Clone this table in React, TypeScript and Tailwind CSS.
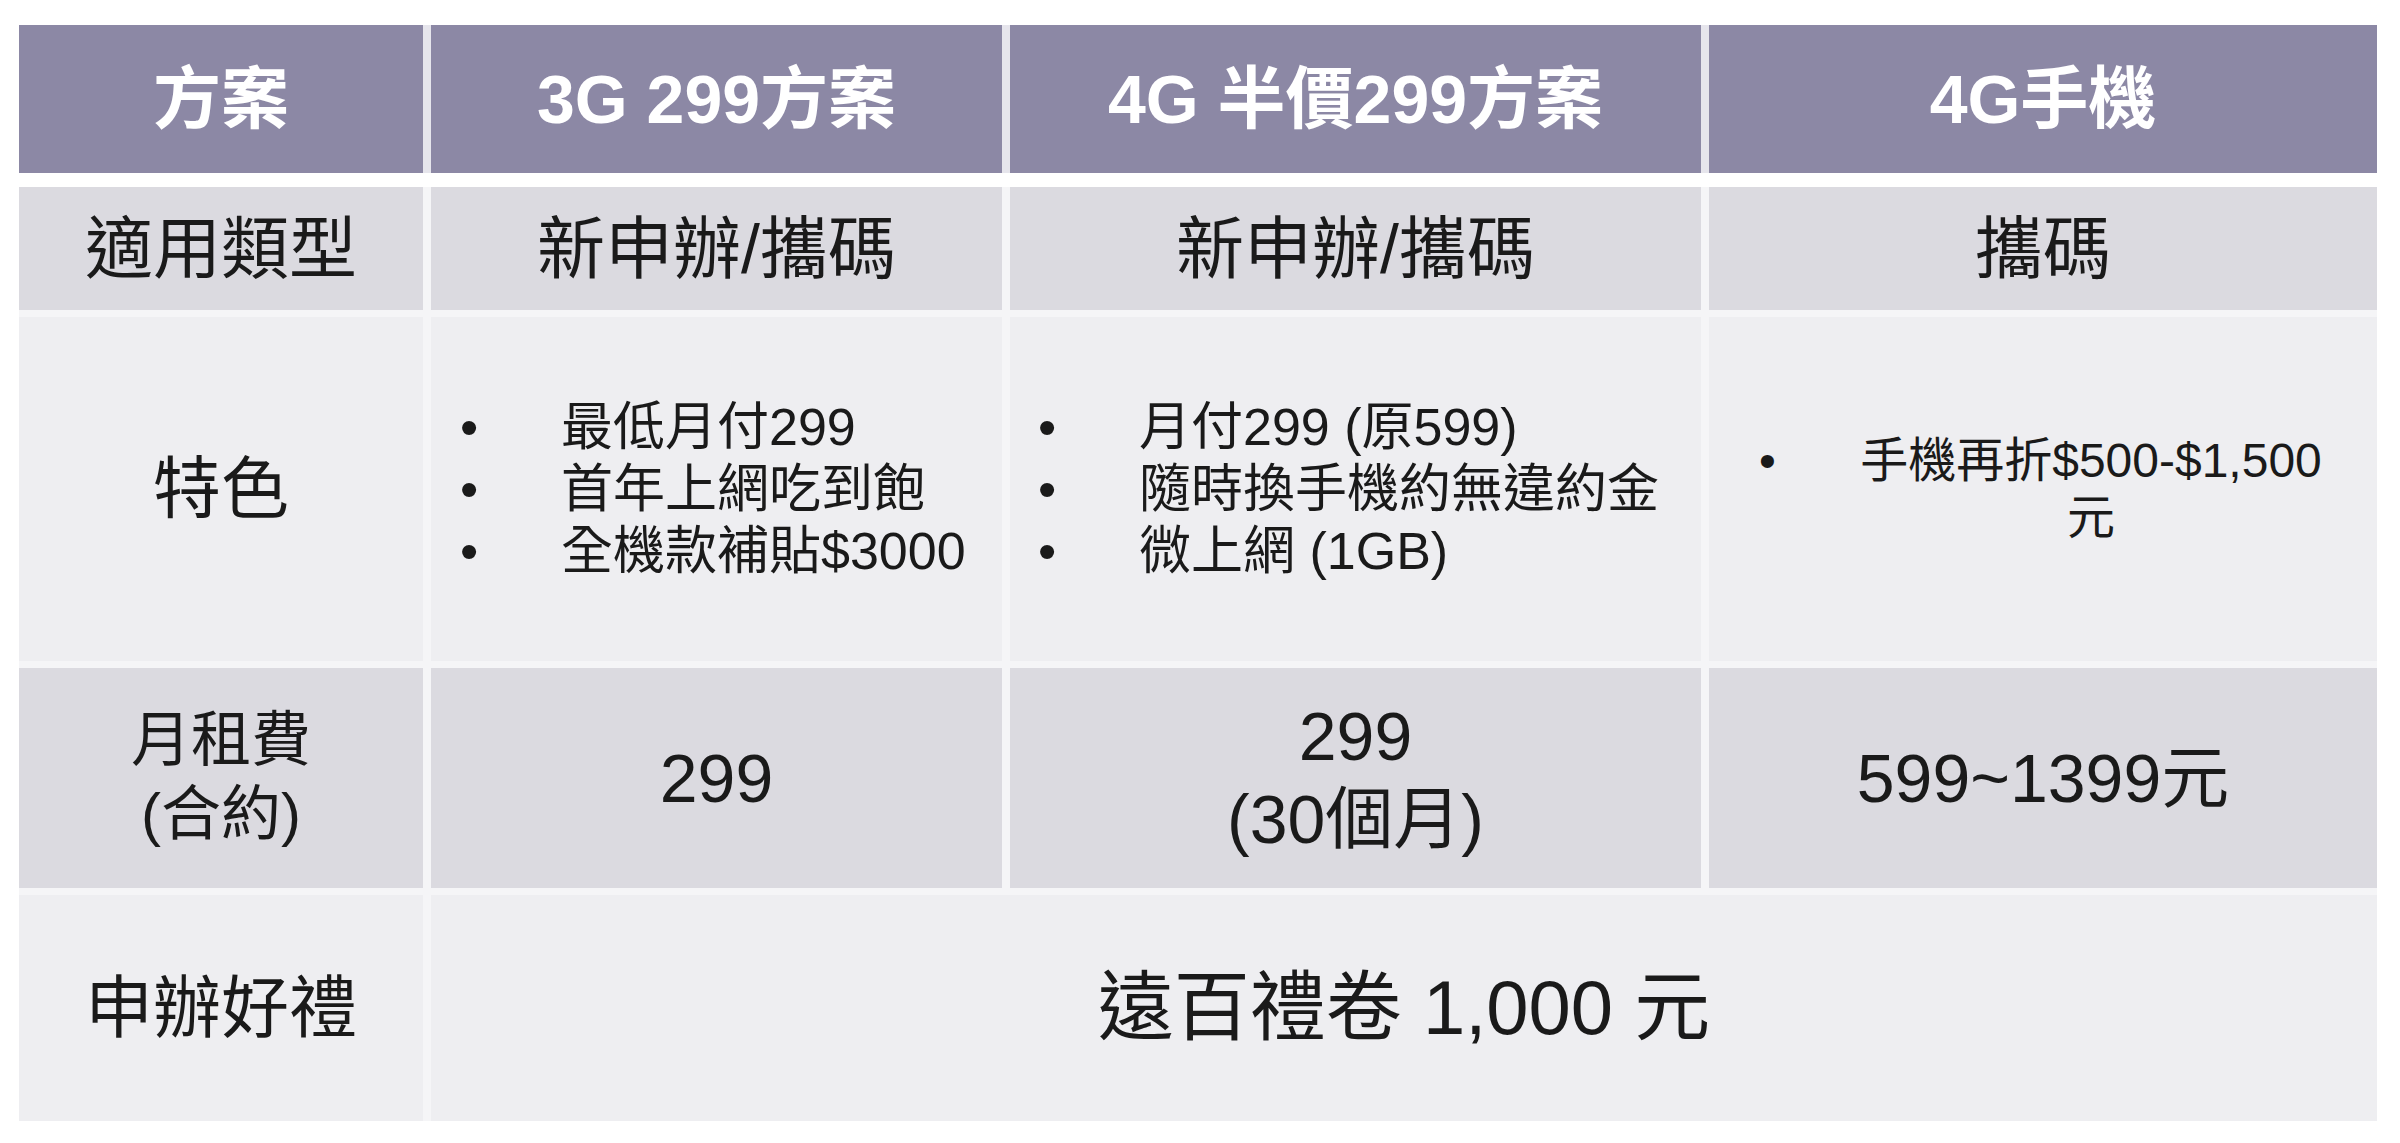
// App.tsx — 方案比較表
const font = "font-['Liberation_Sans','Noto_Sans_CJK_TC',sans-serif]";

function Bullets({ items, className }: { items: string[]; className: string }) {
  return (
    <ul className={`flex flex-col text-[52px] leading-[62px] text-[#1a1a1a] ${className}`}>
      {items.map((t) => (
        <li key={t} className="flex">
          <span className="w-[101px] shrink-0">•</span>
          <span className="whitespace-nowrap">{t}</span>
        </li>
      ))}
    </ul>
  );
}

export default function App() {
  const cols = "grid grid-cols-[404px_571px_691px_668px] gap-x-[8px]";
  const head = "flex items-center justify-center bg-[#8c88a5] text-white font-bold text-[68px] h-[148px]";
  const dark = "bg-[#dbdae0]";
  const light = "bg-[#eeeef1]";
  const cell = "flex items-center justify-center text-center text-[#1a1a1a]";

  return (
    <div className={`w-[2400px] h-[1143px] bg-white pt-[25px] pl-[19px] ${font}`}>
      <div className="w-[2358px]">
        {/* Header */}
        <div className={`${cols} bg-[#e6e5ec]`}>
          <div className={head}>方案</div>
          <div className={head}>3G 299方案</div>
          <div className={head}>4G 半價299方案</div>
          <div className={head}>4G手機</div>
        </div>

        {/* Body */}
        <div className={`${cols} gap-y-[7px] mt-[14px] bg-[#f5f5f7] grid-rows-[123px_344px_220px_226px]`}>
          {/* 適用類型 */}
          <div className={`${cell} ${dark} text-[68px]`}>適用類型</div>
          <div className={`${cell} ${dark} text-[68px]`}>新申辦/攜碼</div>
          <div className={`${cell} ${dark} text-[68px]`}>新申辦/攜碼</div>
          <div className={`${cell} ${dark} text-[68px]`}>攜碼</div>

          {/* 特色 */}
          <div className={`${cell} ${light} text-[68px]`}>特色</div>
          <div className={`flex items-center ${light}`}>
            <Bullets className="pl-[29px]" items={["最低月付299", "首年上網吃到飽", "全機款補貼$3000"]} />
          </div>
          <div className={`flex items-center ${light}`}>
            <Bullets className="pl-[28px]" items={["月付299 (原599)", "隨時換手機約無違約金", "微上網 (1GB)"]} />
          </div>
          <div className={`flex items-center ${light}`}>
            <div className="flex items-start pl-[50px] text-[48px] leading-[57px] text-[#1a1a1a]">
              <span className="w-[101px] shrink-0">•</span>
              <span className="w-[462px] text-center whitespace-nowrap">
                手機再折$500-$1,500
                <br />元
              </span>
            </div>
          </div>

          {/* 月租費 */}
          <div className={`${cell} ${dark} text-[60px] leading-[74px]`}>
            月租費
            <br />
            (合約)
          </div>
          <div className={`${cell} ${dark} text-[68px]`}>299</div>
          <div className={`${cell} ${dark} text-[68px] leading-[83px]`}>
            299
            <br />
            (30個月)
          </div>
          <div className={`${cell} ${dark} text-[68px]`}>599~1399元</div>

          {/* 申辦好禮 */}
          <div className={`${cell} ${light} text-[68px]`}>申辦好禮</div>
          <div className={`${cell} ${light} col-span-3 text-[76px]`}>遠百禮卷 1,000 元</div>
        </div>
      </div>
    </div>
  );
}
